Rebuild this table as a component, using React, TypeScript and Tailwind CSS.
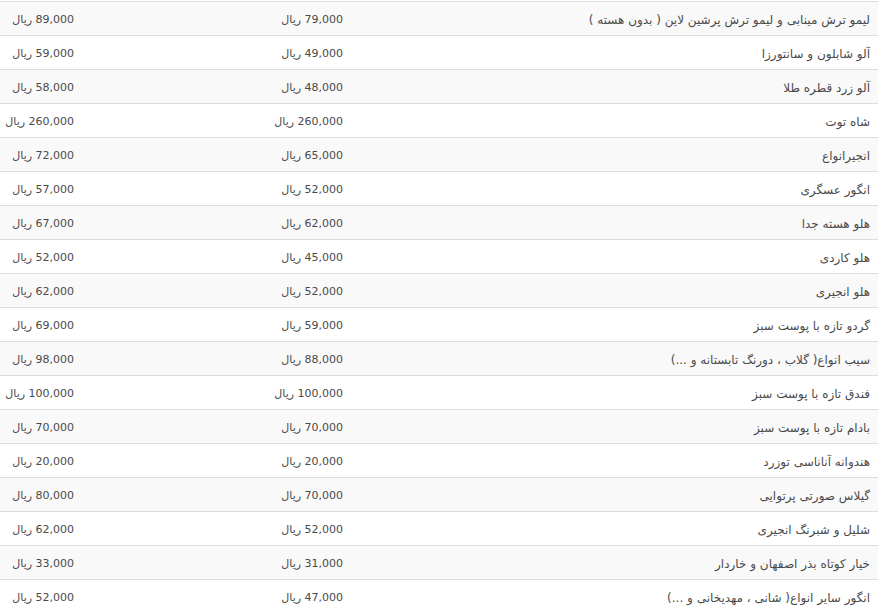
import React from "react";

const rows: [string, string, string][] = [
  ["لیمو ترش مینابی و لیمو ترش پرشین لاین ( بدون هسته )", "79,000", "89,000"],
  ["آلو شابلون و سانتورزا", "49,000", "59,000"],
  ["آلو زرد قطره طلا", "48,000", "58,000"],
  ["شاه توت", "260,000", "260,000"],
  ["انجیرانواع", "65,000", "72,000"],
  ["انگور عسگری", "52,000", "57,000"],
  ["هلو هسته جدا", "62,000", "67,000"],
  ["هلو کاردی", "45,000", "52,000"],
  ["هلو انجیری", "52,000", "62,000"],
  ["گردو تازه با پوست سبز", "59,000", "69,000"],
  ["سیب انواع( گلاب ، دورنگ تابستانه و ...)", "88,000", "98,000"],
  ["فندق تازه با پوست سبز", "100,000", "100,000"],
  ["بادام تازه با پوست سبز", "70,000", "70,000"],
  ["هندوانه آناناسی توزرد", "20,000", "20,000"],
  ["گیلاس صورتی پرتوایی", "70,000", "80,000"],
  ["شلیل و شبرنگ انجیری", "52,000", "62,000"],
  ["خیار کوتاه بذر اصفهان و خاردار", "31,000", "33,000"],
  ["انگور سایر انواع( شانی ، مهدیخانی و ...)", "47,000", "52,000"],
];

export default function App() {
  return (
    <div
      dir="rtl"
      className="w-[878px] h-[610px] overflow-hidden bg-white pt-px text-[11px] text-[#4a4a4a]"
      style={{ fontFamily: '"DejaVu Sans", Tahoma, sans-serif' }}
    >
      {rows.map((r, i) => (
        <div
          key={i}
          className={`grid grid-cols-[527px_269px_82px] h-[34px] border-t border-[#dddddd] items-center pt-[3px] ${
            i % 2 === 0 ? "bg-[#f9f9f9]" : "bg-white"
          }`}
        >
          <div className="pr-2 text-right whitespace-nowrap text-[12px]">{r[0]}</div>
          <div className="pr-2 text-right whitespace-nowrap">{r[1]} ریال</div>
          <div className="pr-2 text-right whitespace-nowrap">{r[2]} ریال</div>
        </div>
      ))}
    </div>
  );
}
